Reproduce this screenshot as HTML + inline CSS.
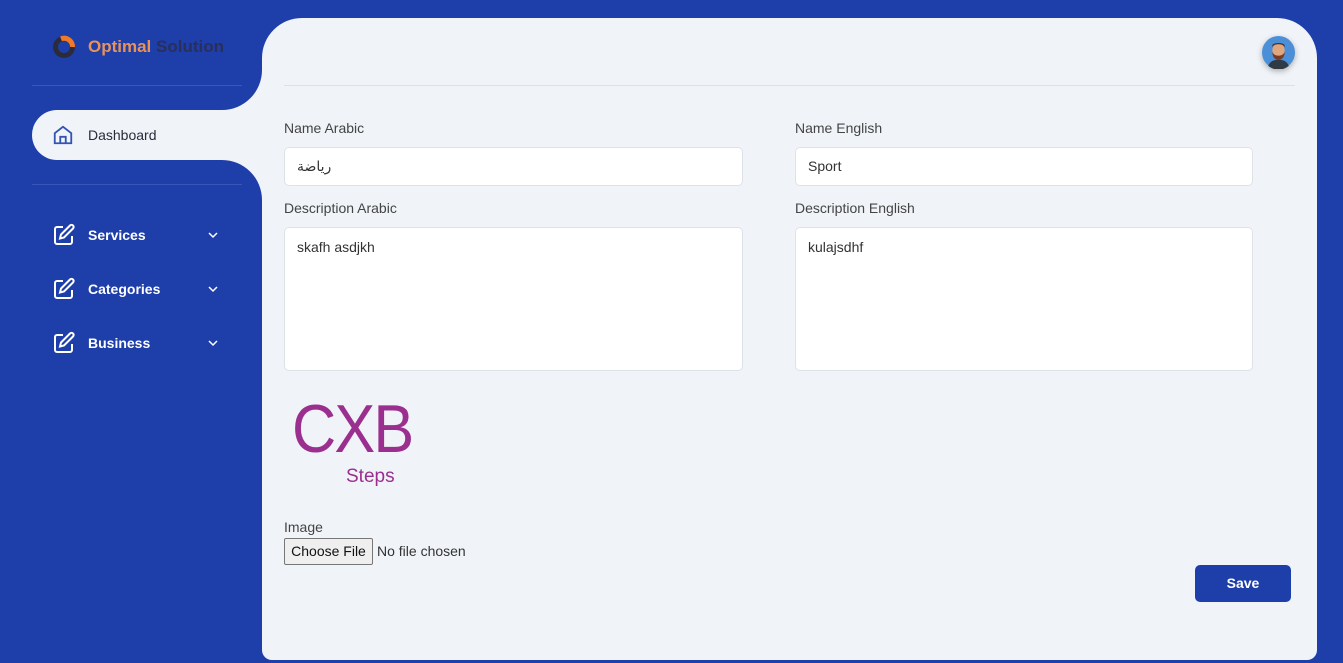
<!DOCTYPE html>
<html><head><style>
*{box-sizing:border-box;margin:0;padding:0}
body{width:1343px;height:663px;background:#1e3eaa;font-family:"Liberation Sans",sans-serif;position:relative;overflow:hidden;color:#333}
.panel{position:absolute;left:262px;top:18px;width:1055px;height:642px;background:#f0f4f8;border-radius:40px 40px 10px 10px}
.fill{position:absolute;left:222px;top:60px;width:45px;height:150px;background:#f0f4f8}
.c1{position:absolute;left:222px;top:40px;width:40px;height:70px;background:#1e3eaa;border-bottom-right-radius:40px}
.c2{position:absolute;left:222px;top:160px;width:40px;height:60px;background:#1e3eaa;border-top-right-radius:40px}
.pill{position:absolute;left:32px;top:110px;width:232px;height:50px;background:#f0f4f8;border-radius:25px 0 0 25px}
.hr{position:absolute;left:32px;width:210px;height:1px;background:#3a57b8}
.nav{position:absolute;left:52px;color:#fff;font-weight:bold;font-size:14px;display:flex;align-items:center}
.nav span{margin-left:12px;width:119px}
.lbl{position:absolute;font-size:14px;color:#444}
.inp{position:absolute;background:#fff;border:1px solid #dde2e8;border-radius:5px;font-size:14px;padding:0 12px;color:#333}
</style></head><body>
<div class="panel"></div>
<div class="fill"></div>
<div class="c1"></div><div class="c2"></div>
<div class="pill"></div>
<svg style="position:absolute;left:52px;top:35px" width="24" height="24" viewBox="0 0 24 24"><circle cx="12" cy="12" r="8.5" fill="none" stroke="#2b2b3a" stroke-width="5"/><path d="M9 3.8A8.5 8.5 0 0 1 20.5 12" fill="none" stroke="#f07a28" stroke-width="5"/></svg>
<div style="position:absolute;left:88px;top:37px;font-size:17px;font-weight:bold"><span style="color:#e8925a">Optimal</span> <span style="color:#2a2f5a">Solution</span></div>
<div class="hr" style="top:85px"></div>
<div class="hr" style="top:184px"></div>
<svg style="position:absolute;left:52px;top:124px" width="22" height="22" viewBox="0 0 24 24" fill="none" stroke="#3454b4" stroke-width="2"><path d="M3 10L12 3l9 7v11H3z"/><path d="M9 21v-7h6v7"/></svg>
<div style="position:absolute;left:88px;top:127px;font-size:14px;color:#2a2a3a">Dashboard</div>
<div class="nav" style="top:223px"><svg width="24" height="24" viewBox="0 0 24 24" fill="none" stroke="#fff" stroke-width="2"><path d="M11 4H5a2 2 0 0 0-2 2v13a2 2 0 0 0 2 2h13a2 2 0 0 0 2-2v-6"/><path d="M18 2.5a2.1 2.1 0 0 1 3 3L12 14.5l-4 1 1-4z"/></svg><span>Services</span><svg width="12" height="12" viewBox="0 0 12 12" fill="none" stroke="#fff" stroke-width="1.5"><path d="M2 4l4 4 4-4"/></svg></div>
<div class="nav" style="top:277px"><svg width="24" height="24" viewBox="0 0 24 24" fill="none" stroke="#fff" stroke-width="2"><path d="M11 4H5a2 2 0 0 0-2 2v13a2 2 0 0 0 2 2h13a2 2 0 0 0 2-2v-6"/><path d="M18 2.5a2.1 2.1 0 0 1 3 3L12 14.5l-4 1 1-4z"/></svg><span>Categories</span><svg width="12" height="12" viewBox="0 0 12 12" fill="none" stroke="#fff" stroke-width="1.5"><path d="M2 4l4 4 4-4"/></svg></div>
<div class="nav" style="top:331px"><svg width="24" height="24" viewBox="0 0 24 24" fill="none" stroke="#fff" stroke-width="2"><path d="M11 4H5a2 2 0 0 0-2 2v13a2 2 0 0 0 2 2h13a2 2 0 0 0 2-2v-6"/><path d="M18 2.5a2.1 2.1 0 0 1 3 3L12 14.5l-4 1 1-4z"/></svg><span>Business</span><svg width="12" height="12" viewBox="0 0 12 12" fill="none" stroke="#fff" stroke-width="1.5"><path d="M2 4l4 4 4-4"/></svg></div>

<svg style="position:absolute;left:1262px;top:36px;filter:drop-shadow(0 2px 3px rgba(0,0,0,.3))" width="33" height="33" viewBox="0 0 32 32"><circle cx="16" cy="16" r="16" fill="#4a8fd8"/><path d="M6 29c2-5 6-6 10-6s8 1 10 6a16 16 0 0 1-20 0z" fill="#2f3a44"/><ellipse cx="16" cy="14" rx="6" ry="7" fill="#e0a67e"/><path d="M10 15c0 6 3 8 6 8s6-2 6-8c-1 3-3 4-6 4s-5-1-6-4z" fill="#7a3b25"/><path d="M10 11c1-4 11-4 12 0v-2c-1-3-11-3-12 0z" fill="#5a2f1c"/></svg>
<div style="position:absolute;left:284px;top:85px;width:1011px;height:1px;background:#dde1e6"></div>

<div class="lbl" style="left:284px;top:120px">Name Arabic</div>
<div class="lbl" style="left:795px;top:120px">Name English</div>
<div class="inp" style="left:284px;top:147px;width:459px;height:39px;line-height:37px;font-family:'Liberation Sans','DejaVu Sans',sans-serif">رياضة</div>
<div class="inp" style="left:795px;top:147px;width:458px;height:39px;line-height:37px">Sport</div>
<div class="lbl" style="left:284px;top:200px">Description Arabic</div>
<div class="lbl" style="left:795px;top:200px">Description English</div>
<div class="inp" style="left:284px;top:227px;width:459px;height:144px;padding-top:11px">skafh asdjkh</div>
<div class="inp" style="left:795px;top:227px;width:458px;height:144px;padding-top:11px">kulajsdhf</div>

<div style="position:absolute;left:292px;top:390px;font-size:68px;color:#9b2f8f;font-family:'Liberation Sans',sans-serif;letter-spacing:-2px;transform:scaleX(0.9);transform-origin:left">CXB</div>
<div style="position:absolute;left:346px;top:466px;font-size:19px;color:#9b2f8f">Steps</div>

<div class="lbl" style="left:284px;top:519px">Image</div>
<div style="position:absolute;left:284px;top:538px;width:89px;height:27px;border:1px solid #777;border-radius:2px;background:#efefef;font-size:14px;text-align:center;line-height:25px;color:#111">Choose File</div>
<div style="position:absolute;left:377px;top:543px;font-size:14px;color:#333">No file chosen</div>
<div style="position:absolute;left:1195px;top:565px;width:96px;height:37px;background:#1e3eaa;border-radius:5px;color:#fff;font-weight:bold;font-size:14px;text-align:center;line-height:37px">Save</div>
</body></html>
